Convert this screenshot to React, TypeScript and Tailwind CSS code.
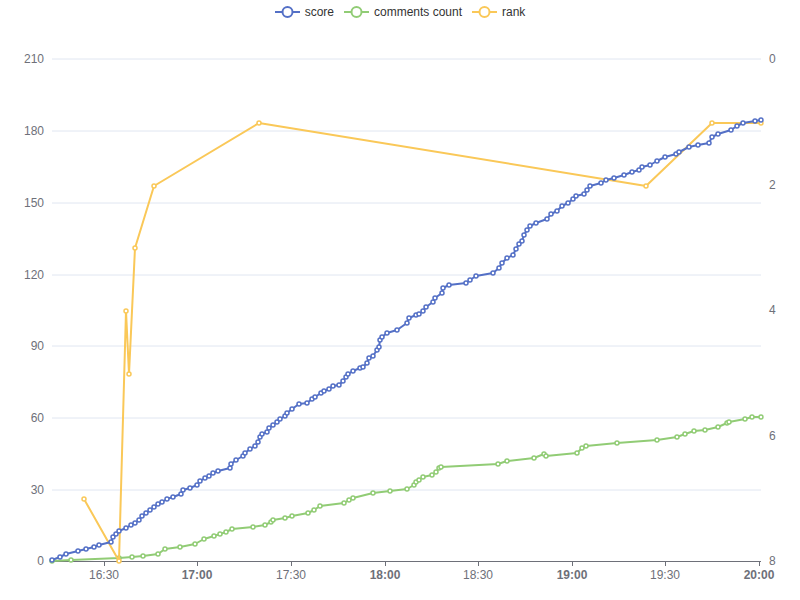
import React from 'react';

const score: [number, number][] = [[52,560],[60,557],[66,554],[78,551],[86,549],[94,547],[99,545],[111,542],[113,537],[116,534],[119,531],[126,528],[131,525],[135,523],[139,520],[142,516],[146,513],[150,510],[154,507],[158,504],[162,502],[167,499],[173,497],[181,494],[183,490],[190,488],[197,485],[200,481],[205,478],[209,476],[213,473],[218,471],[230,468],[231,464],[236,460],[243,456],[245,453],[250,449],[255,446],[258,442],[260,437],[262,434],[267,432],[269,428],[273,425],[277,422],[280,419],[285,416],[287,413],[292,409],[299,404],[307,403],[312,399],[315,397],[321,393],[324,391],[329,389],[333,386],[339,385],[343,381],[346,377],[348,374],[353,371],[360,368],[363,367],[367,363],[369,358],[373,356],[377,350],[379,347],[380,340],[382,337],[387,333],[397,330],[407,323],[409,318],[416,315],[419,314],[423,311],[426,307],[433,302],[435,298],[442,293],[443,288],[449,285],[466,283],[470,280],[476,276],[493,273],[499,268],[502,263],[507,258],[513,255],[516,249],[519,244],[522,241],[524,235],[527,230],[530,226],[536,223],[547,219],[551,214],[557,211],[562,206],[568,203],[573,199],[576,196],[584,194],[587,190],[590,186],[601,183],[606,180],[614,178],[624,175],[632,172],[639,170],[642,167],[650,165],[657,161],[665,157],[676,154],[679,152],[689,147],[698,145],[709,143],[712,137],[718,134],[731,130],[737,126],[743,123],[755,121],[761,120]];

const comments: [number, number][] = [[52,561],[71,560],[119,558],[132,557],[143,556],[158,554],[165,549],[180,547],[195,544],[204,539],[214,536],[220,534],[226,532],[232,529],[253,527],[265,525],[271,522],[273,520],[285,518],[292,516],[308,513],[314,510],[320,506],[344,503],[349,500],[353,498],[373,493],[390,491],[407,489],[414,485],[416,482],[419,480],[423,477],[432,475],[436,472],[439,468],[441,467],[498,464],[507,461],[534,458],[544,454],[546,456],[577,453],[582,448],[586,446],[617,443],[657,440],[677,437],[685,434],[694,431],[705,430],[718,427],[727,423],[729,422],[745,419],[752,417],[761,417]];

const rank: [number, number][] = [[84,499],[119,561],[126,311],[129,374],[135,248],[154,186],[259,123],[646,186],[712,123],[761,123]];

const Series = ({ pts, color }: { pts: [number, number][]; color: string }) => (
  <g>
    <polyline points={pts.map(p => p.join(',')).join(' ')} fill="none" stroke={color} strokeWidth={2} strokeLinejoin="round" />
    {pts.map(([x, y], i) => <circle key={i} cx={x} cy={y} r={2} fill="#fff" stroke={color} strokeWidth={1.5} />)}
  </g>
);

const LegendItem = ({ color, label }: { color: string; label: string }) => (
  <div className="flex items-center gap-[5px]">
    <svg width="25" height="14">
      <line x1="0" y1="7" x2="25" y2="7" stroke={color} strokeWidth={2} />
      <circle cx="12.5" cy="7" r="5" fill="#fff" stroke={color} strokeWidth={2} />
    </svg>
    <span>{label}</span>
  </div>
);

export default function App() {
  const left = [[0, 561], [30, 490], [60, 418], [90, 346], [120, 275], [150, 203], [180, 131], [210, 59]];
  const right = [[0, 59], [2, 185], [4, 310], [6, 436], [8, 561]];
  const xs: [string, number, boolean][] = [['16:30', 104, false], ['17:00', 197, true], ['17:30', 291, false], ['18:00', 385, true], ['18:30', 478, false], ['19:00', 572, true], ['19:30', 665, false], ['20:00', 759, true]];
  return (
    <div className="relative w-[800px] h-[600px] bg-white" style={{ fontFamily: '"Liberation Sans", Arial, sans-serif' }}>
      <div className="absolute top-[3px] left-0 w-full flex justify-center gap-[10px] text-[12px] text-[#333]">
        <LegendItem color="#5470c6" label="score" />
        <LegendItem color="#91cc75" label="comments count" />
        <LegendItem color="#fac858" label="rank" />
      </div>
      <svg width="800" height="600" className="block">
        {left.slice(1).map(([, y]) => <line key={y} x1="52" x2="761" y1={y} y2={y} stroke="#e0e6f1" />)}
        <line x1="52" x2="761" y1="561.5" y2="561.5" stroke="#6e7079" />
        {xs.map(([, x]) => <line key={x} x1={x + 0.5} x2={x + 0.5} y1="561" y2="566" stroke="#6e7079" />)}
        {left.map(([v, y]) => <text key={v} x="44" y={y + 4} textAnchor="end" fontSize="12" fill="#6e7079">{v}</text>)}
        {right.map(([v, y]) => <text key={v} x="769" y={y + 4} fontSize="12" fill="#6e7079">{v}</text>)}
        {xs.map(([t, x, b]) => <text key={t} x={x} y="579" textAnchor="middle" fontSize="12" fill="#6e7079" fontWeight={b ? 'bold' : 'normal'}>{t}</text>)}
        <Series pts={comments} color="#91cc75" />
        <Series pts={rank} color="#fac858" />
        <Series pts={score} color="#5470c6" />
      </svg>
    </div>
  );
}
